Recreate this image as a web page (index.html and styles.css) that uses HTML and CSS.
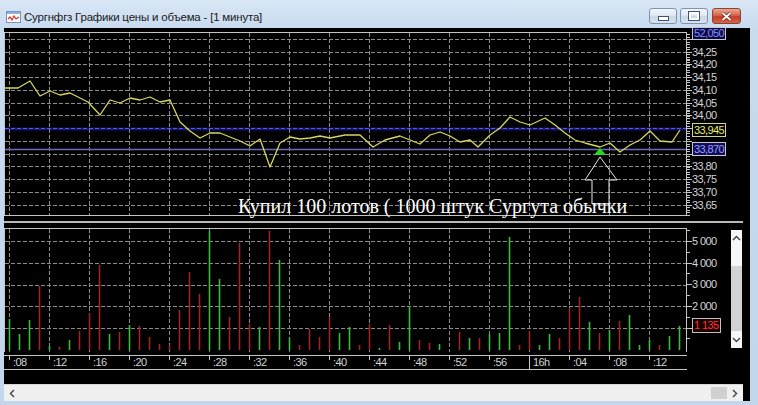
FILE: index.html
```html
<!DOCTYPE html>
<html>
<head>
<meta charset="utf-8">
<link rel="stylesheet" href="styles.css">
</head>
<body>
<div class="window">
  <div class="titlebar">
    <svg class="app-icon" width="15" height="12" viewBox="0 0 15 12">
      <rect x="0.5" y="0.5" width="14" height="11" fill="#fff" stroke="#7a96b8"/>
      <rect x="1" y="1" width="13" height="2" fill="#8fb2dc"/>
      <polyline points="2,8 4,6 6,9 8,5 10,8 13,6" fill="none" stroke="#d8342a" stroke-width="1.2"/>
    </svg>
    <span class="title">Сургнфгз Графики цены и объема - [1 минута]</span>
    <div class="buttons">
      <div class="btn btn-light"><span class="glyph-min"></span></div>
      <div class="btn btn-light"><span class="glyph-max"></span></div>
      <div class="btn btn-close">
        <svg width="11" height="9" viewBox="0 0 11 9"><path d="M1.5 1L9.5 8M9.5 1L1.5 8" stroke="#5a2018" stroke-width="3.2"/><path d="M1.5 1L9.5 8M9.5 1L1.5 8" stroke="#fff" stroke-width="1.8"/></svg>
      </div>
    </div>
  </div>

  <div class="client">
    <div class="price-row">
      <div class="price-plot">
        <svg class="plot-svg" width="681" height="182" viewBox="0 0 681 182">
          <rect x="0" y="94.5" width="681" height="3" fill="#141470"/>
          <path class="grid" d="M0 6.5H681M0 19.5H681M0 31.5H681M0 44.5H681M0 57.5H681M0 70.5H681M0 82.5H681M0 108.5H681M0 121.5H681M0 133.5H681M0 146.5H681M0 159.5H681M0 172.5H681"/>
          <path class="grid grid-blue" d="M0 95.5H681"/>
          <path class="grid" d="M4.5 0V182M44.5 0V182M84.5 0V182M124.5 0V182M164.5 0V182M204.5 0V182M244.5 0V182M284.5 0V182M324.5 0V182M364.5 0V182M404.5 0V182M444.5 0V182M484.5 0V182M524.5 0V182M564.5 0V182M604.5 0V182M644.5 0V182"/>
          <line x1="0" y1="116.5" x2="681" y2="116.5" stroke="#6a6ab8" stroke-width="1.5"/>
          <polyline class="price-line" points="0,55 13,55 25,48 35,63 45,58 55,62 65,60 83,69 95,82 105,67 115,70 125,65 135,67 145,64 155,69 165,67 175,89 185,98 195,105 205,100 215,100 225,104 235,108 245,113 255,106 265,134 275,110 285,104 295,106 305,105 315,103 325,105 340,102 355,102 368,114 380,107 395,103 405,107 415,111 425,102 435,99 445,103 455,109 465,107 473,114 485,102 495,95 505,84 515,89 525,92 540,85 550,92 560,100 570,107 580,110 595,114 605,110 615,119 625,112 635,107 645,98 655,108 667,109 675,97"/>
          <polygon points="589,122 601,122 595,115" fill="#22dd22"/>
          <polygon points="595,124 612,147 604,147 604,171 587,171 587,147 580,147" fill="none" stroke="#e8e8e8" stroke-width="1"/>
        </svg>
        <span class="note">Купил 100 лотов ( 1000 штук Сургута обычки</span>
      </div>
      <div class="price-axis">
        <div class="p-ticks"></div>
        <div class="p-labels">
          <span class="lbl"></span>
          <span class="lbl">34,25</span>
          <span class="lbl">34,20</span>
          <span class="lbl">34,15</span>
          <span class="lbl">34,10</span>
          <span class="lbl">34,05</span>
          <span class="lbl">34,00</span>
          <span class="lbl"></span>
          <span class="lbl"></span>
          <span class="lbl"></span>
          <span class="lbl">33,80</span>
          <span class="lbl">33,75</span>
          <span class="lbl">33,70</span>
          <span class="lbl">33,65</span>
        </div>
        <span class="tag tag-top">52,050</span>
        <span class="tag tag-last">33,945</span>
        <span class="tag tag-line">33,870</span>
      </div>
    </div>

    <div class="splitter"><div class="split-line"></div></div>

    <div class="volume-row">
      <div class="vol-plot">
        <svg class="plot-svg" width="681" height="123" viewBox="0 0 681 123">
          <path class="grid" d="M0 12.5H681M0 34.5H681M0 56.5H681M0 77.5H681M0 99.5H681"/>
          <path class="grid" d="M4.5 0V123M44.5 0V123M84.5 0V123M124.5 0V123M164.5 0V123M204.5 0V123M244.5 0V123M284.5 0V123M324.5 0V123M364.5 0V123M404.5 0V123M444.5 0V123M484.5 0V123M524.5 0V123M564.5 0V123M604.5 0V123M644.5 0V123"/>
          <path class="bars-g" d="M4.5 121V90M14.5 121V105M24.5 121V91M44.5 121V117M64.5 121V111M104.5 121V105M124.5 121V96M204.5 121V2M214.5 121V50M254.5 121V98M274.5 121V31M284.5 121V109M334.5 121V104M344.5 121V98M374.5 121V119M394.5 121V113M404.5 121V77M434.5 121V115M464.5 121V109M484.5 121V105M494.5 121V104M504.5 121V8M534.5 121V116M544.5 121V105M584.5 121V93M604.5 121V101M624.5 121V86M634.5 121V116M644.5 121V111M664.5 121V107M674.5 121V97"/>
          <path class="bars-r" d="M34.5 121V57M54.5 121V118M74.5 121V102M84.5 121V84M94.5 121V36M114.5 121V103M134.5 121V97M144.5 121V108M154.5 121V115M164.5 121V116M174.5 121V81M184.5 121V43M194.5 121V65M224.5 121V88M234.5 121V14M244.5 121V95M264.5 121V2M294.5 121V116M304.5 121V100M314.5 121V108M324.5 121V88M354.5 121V116M364.5 121V95M384.5 121V96M414.5 121V111M424.5 121V114M454.5 121V103M474.5 121V109M514.5 121V116M524.5 121V102M554.5 121V109M564.5 121V79M574.5 121V68M594.5 121V104M614.5 121V92M654.5 121V116"/>
        </svg>
      </div>
      <div class="vol-axis">
        <div class="v-ticks"></div>
        <div class="v-labels">
          <span class="vlbl">5 000</span>
          <span class="vlbl">4 000</span>
          <span class="vlbl">3 000</span>
          <span class="vlbl">2 000</span>
        </div>
        <span class="tag tag-vol">1 135</span>
      </div>
      <div class="vscroll">
        <svg class="chev" width="9" height="6" viewBox="0 0 9 6"><path d="M1 5L4.5 1.5L8 5" fill="none" stroke="#404040" stroke-width="1.4"/></svg>
        <div class="vtrack-top"></div>
        <div class="vthumb"></div>
        <div class="vtrack-bottom"></div>
        <svg class="chev" width="9" height="6" viewBox="0 0 9 6"><path d="M1 1L4.5 4.5L8 1" fill="none" stroke="#404040" stroke-width="1.4"/></svg>
      </div>
    </div>

    <div class="time-row">
      <span class="tcell">:08</span>
      <span class="tcell">:12</span>
      <span class="tcell">:16</span>
      <span class="tcell">:20</span>
      <span class="tcell">:24</span>
      <span class="tcell">:28</span>
      <span class="tcell">:32</span>
      <span class="tcell">:36</span>
      <span class="tcell">:40</span>
      <span class="tcell">:44</span>
      <span class="tcell">:48</span>
      <span class="tcell">:52</span>
      <span class="tcell">:56</span>
      <span class="tcell tcell-hour">16h</span>
      <span class="tcell">:04</span>
      <span class="tcell">:08</span>
      <span class="tcell">:12</span>
    </div>

    <div class="hscroll">
      <svg class="hchev" width="6" height="9" viewBox="0 0 6 9"><path d="M5 1L1.5 4.5L5 8" fill="none" stroke="#404040" stroke-width="1.4"/></svg>
      <div class="htrack"></div>
      <div class="hthumb"></div>
      <svg class="hchev" width="6" height="9" viewBox="0 0 6 9"><path d="M1 1L4.5 4.5L1 8" fill="none" stroke="#404040" stroke-width="1.4"/></svg>
    </div>
  </div>
</div>
</body>
</html>
```

FILE: styles.css
```css
html, body {
  margin: 0;
  padding: 0;
  background: #c4d8ee;
  overflow: hidden;
}

.window {
  width: 758px;
  height: 405px;
  display: flex;
  flex-direction: column;
  background: linear-gradient(to bottom, #d9e7f6 0, #c8dbef 28px, #c2d6ec 100%);
  font-family: "Liberation Sans", Arial, sans-serif;
}

/* ---------- title bar ---------- */
.titlebar {
  height: 28px;
  flex: none;
  display: flex;
  align-items: flex-start;
}

.app-icon {
  margin: 11px 0 0 6px;
  flex: none;
}

.title {
  margin: 10px 0 0 3px;
  font: 11.5px/14px "Liberation Sans", Arial, sans-serif;
  letter-spacing: -0.2px;
  color: #1a1a1a;
  white-space: nowrap;
}

.buttons {
  margin: 8px 17px 0 auto;
  display: flex;
  gap: 3px;
}

.btn {
  height: 16px;
  box-sizing: border-box;
  border: 1px solid #7f93ae;
  border-radius: 3px;
  display: flex;
  align-items: center;
  justify-content: center;
}

.btn-light {
  width: 28px;
  background: linear-gradient(to bottom, #f2f6fb 0, #dfe8f3 45%, #c9d7e8 55%, #d8e3f0 100%);
}

.btn-close {
  width: 29px;
  margin-left: 1px;
  border-color: #8a4436;
  background: linear-gradient(to bottom, #eaa795 0, #d8654c 45%, #c43d25 55%, #d3634a 100%);
}

.glyph-min {
  width: 9px;
  height: 3px;
  margin-top: 5px;
  background: #fff;
  border: 1px solid #45526a;
}

.glyph-max {
  width: 6px;
  height: 4px;
  border: 2px solid #fff;
  outline: 1px solid #45526a;
}

/* ---------- client ---------- */
.client {
  margin: 0 8px 4px 4px;
  height: 373px;
  background: #000;
  display: flex;
  flex-direction: column;
  color: #d4d4d4;
  font-size: 11px;
  letter-spacing: -0.6px;
}

.plot-svg {
  display: block;
}

.grid {
  fill: none;
  stroke: #8c8c8c;
  stroke-width: 1;
  stroke-dasharray: 4 2;
}

.grid-blue {
  stroke: #5a5ad8;
}

.price-line {
  fill: none;
  stroke: #d6d65c;
  stroke-width: 1.3;
  stroke-linejoin: round;
}

.bars-g {
  fill: none;
  stroke: #3cbc3c;
  stroke-width: 1.6;
}

.bars-r {
  fill: none;
  stroke: #a02424;
  stroke-width: 1.6;
}

/* price panel */
.price-row {
  margin-top: 4px;
  height: 184px;
  flex: none;
  display: flex;
}

.price-plot {
  width: 683px;
  height: 184px;
  box-sizing: border-box;
  border: 1px solid #c4c4c4;
  position: relative;
  flex: none;
}

.note {
  position: absolute;
  left: 233px;
  top: 163px;
  font: 20px/20px "Liberation Serif", "Times New Roman", serif;
  letter-spacing: 0;
  color: #fff;
  white-space: nowrap;
}

.price-axis {
  width: 63px;
  flex: none;
  position: relative;
  display: flex;
}

.p-ticks {
  width: 5px;
  flex: none;
  background-image:
    repeating-linear-gradient(to bottom, #c8c8c8 0 1px, transparent 1px 12.75px),
    repeating-linear-gradient(to bottom, #c8c8c8 0 1px, transparent 1px 2.55px);
  background-size: 5px 100%, 3px 100%;
  background-repeat: no-repeat;
  background-position: 0 6.75px, 0 1.65px;
}

.p-labels {
  padding-top: 0.875px;
  display: flex;
  flex-direction: column;
}

.lbl {
  height: 12.75px;
  line-height: 12.75px;
  white-space: nowrap;
}

.tag {
  position: absolute;
  left: 5px;
  box-sizing: border-box;
  width: 34px;
  height: 13px;
  line-height: 11px;
  padding-left: 1px;
  border: 1px solid #c8c8c8;
  white-space: nowrap;
}

.tag-top {
  top: -5px;
  color: #8a8cff;
  background: #0c0c44;
}

.tag-last {
  top: 91px;
  height: 14px;
  line-height: 12px;
  color: #e8e870;
  background: #000;
  border-color: #d0d090;
}

.tag-line {
  top: 110px;
  height: 14px;
  line-height: 12px;
  color: #9c9cff;
  background: #0e0e58;
}

/* splitter */
.splitter {
  height: 12px;
  flex: none;
  padding-top: 5px;
  box-sizing: border-box;
}

.split-line {
  width: 739px;
  height: 2px;
  background: #b8b8b8;
}

/* volume panel */
.volume-row {
  height: 124px;
  flex: none;
  display: flex;
}

.vol-plot {
  width: 683px;
  height: 124px;
  box-sizing: border-box;
  border: 1px solid #c4c4c4;
  border-bottom: none;
  flex: none;
}

.vol-axis {
  width: 44px;
  flex: none;
  position: relative;
  display: flex;
}

.v-ticks {
  width: 5px;
  height: 118px;
  flex: none;
  background-image:
    repeating-linear-gradient(to bottom, #c8c8c8 0 1px, transparent 1px 21.7px),
    repeating-linear-gradient(to bottom, #c8c8c8 0 1px, transparent 1px 10.85px);
  background-size: 5px 100%, 3px 100%;
  background-repeat: no-repeat;
  background-position: 0 13.2px, 0 2.35px;
}

.v-labels {
  padding-top: 2.85px;
  display: flex;
  flex-direction: column;
}

.vlbl {
  height: 21.7px;
  line-height: 21.7px;
  white-space: nowrap;
}

.tag-vol {
  top: 90px;
  width: 29px;
  height: 15px;
  line-height: 13px;
  color: #ff3434;
  background: #1c0000;
  border-color: #c0c0c0;
}

.vscroll {
  width: 11px;
  height: 118px;
  margin-top: 2px;
  flex: none;
  background: #f6f6f6;
  display: flex;
  flex-direction: column;
  align-items: center;
}

.chev {
  flex: none;
  margin: 5px 0;
}

.vtrack-top {
  height: 20px;
  flex: none;
}

.vthumb {
  width: 11px;
  height: 65px;
  flex: none;
  background: #d2d2d2;
}

.vtrack-bottom {
  flex: 1;
}

/* time axis */
.time-row {
  margin-top: 3px;
  width: 683px;
  height: 15px;
  flex: none;
  box-sizing: border-box;
  border-top: 1px solid #c4c4c4;
  border-bottom: 1px solid #c4c4c4;
  padding-left: 5px;
  display: flex;
  line-height: 13px;
}

.tcell {
  width: 40px;
  flex: none;
  position: relative;
  padding-left: 4px;
  box-sizing: border-box;
  white-space: nowrap;
}

.tcell::before {
  content: "";
  position: absolute;
  left: 0;
  top: 0;
  width: 1px;
  height: 4px;
  background: #c8c8c8;
}

.tcell-hour::before {
  height: 13px;
}

/* horizontal scrollbar */
.hscroll {
  margin-top: 14px;
  width: 739px;
  height: 17px;
  flex: none;
  box-sizing: border-box;
  border-top: 1px solid #d8d8d8;
  background: #f0f0f0;
  display: flex;
  align-items: center;
}

.hchev {
  flex: none;
  margin: 0 5px;
}

.htrack {
  flex: 1;
}

.hthumb {
  width: 16px;
  height: 12px;
  flex: none;
  background: #d0d0d0;
}
```
